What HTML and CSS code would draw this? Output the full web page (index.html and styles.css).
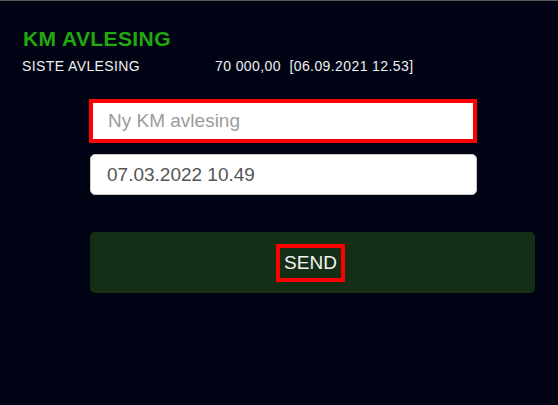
FILE: index.html
```html
<!DOCTYPE html>
<html lang="no">
<head>
<meta charset="utf-8">
<title>KM avlesing</title>
<link rel="stylesheet" href="styles.css">
</head>
<body>
<main class="screen">
  <header class="head">
    <h1 class="title">KM AVLESING</h1>
    <div class="last">
      <span class="last-label">SISTE AVLESING</span>
      <span class="last-value">70 000,00&nbsp; [06.09.2021 12.53]</span>
    </div>
  </header>
  <form class="form">
    <input class="field field-km" type="text" placeholder="Ny KM avlesing">
    <input class="field field-date" type="text" value="07.03.2022 10.49">
    <button class="send" type="button"><span class="send-label">SEND</span></button>
  </form>
</main>
</body>
</html>
```

FILE: styles.css
```css
html, body {
  margin: 0;
  padding: 0;
  background: #000314;
  height: 100%;
}
body {
  border-top: 1px solid #5b5b5b;
  box-sizing: border-box;
  font-family: "Liberation Sans", Arial, sans-serif;
  color: #f2f2f2;
}
.screen {
  display: flex;
  flex-direction: column;
}
.head {
  padding: 25px 0 0 22px;
}
.title {
  margin: 0 0 0 1px;
  font-size: 21px;
  line-height: 25px;
  font-weight: bold;
  letter-spacing: 0.4px;
  color: #22a80f;
}
.last {
  margin-top: 7px;
  display: grid;
  grid-template-columns: 193px auto;
  font-size: 14px;
  line-height: 17px;
  letter-spacing: 0.4px;
  color: #f0f0f0;
}
.form {
  display: flex;
  flex-direction: column;
  align-items: flex-start;
  padding-left: 89px;
  margin-top: 24px;
}
.field {
  box-sizing: border-box;
  font-family: "Liberation Sans", Arial, sans-serif;
  font-size: 19px;
  background: #ffffff;
  outline: none;
  margin: 0;
}
.field-km {
  width: 388px;
  height: 44px;
  border: 4px solid #ff0000;
  border-radius: 0;
  padding: 0 0 0 15px;
}
.field-km::placeholder {
  color: #9c9c9c;
  opacity: 1;
}
.field-date {
  margin: 11px 0 0 1px;
  width: 387px;
  height: 41px;
  border: 1px solid #c8c8c8;
  border-radius: 5px;
  padding: 0 0 0 16px;
  color: #555555;
}
.send {
  margin: 37px 0 0 1px;
  width: 445px;
  height: 61px;
  border: none;
  border-radius: 5px;
  background: #152f16;
  display: flex;
  align-items: center;
  justify-content: center;
  padding: 0 4px 0 0;
  cursor: pointer;
}
.send-label {
  box-sizing: border-box;
  width: 69px;
  height: 38px;
  border: 4px solid #ff0000;
  display: flex;
  align-items: center;
  justify-content: center;
  font-family: "Liberation Sans", Arial, sans-serif;
  font-size: 19px;
  color: #f4f4f4;
}
```
